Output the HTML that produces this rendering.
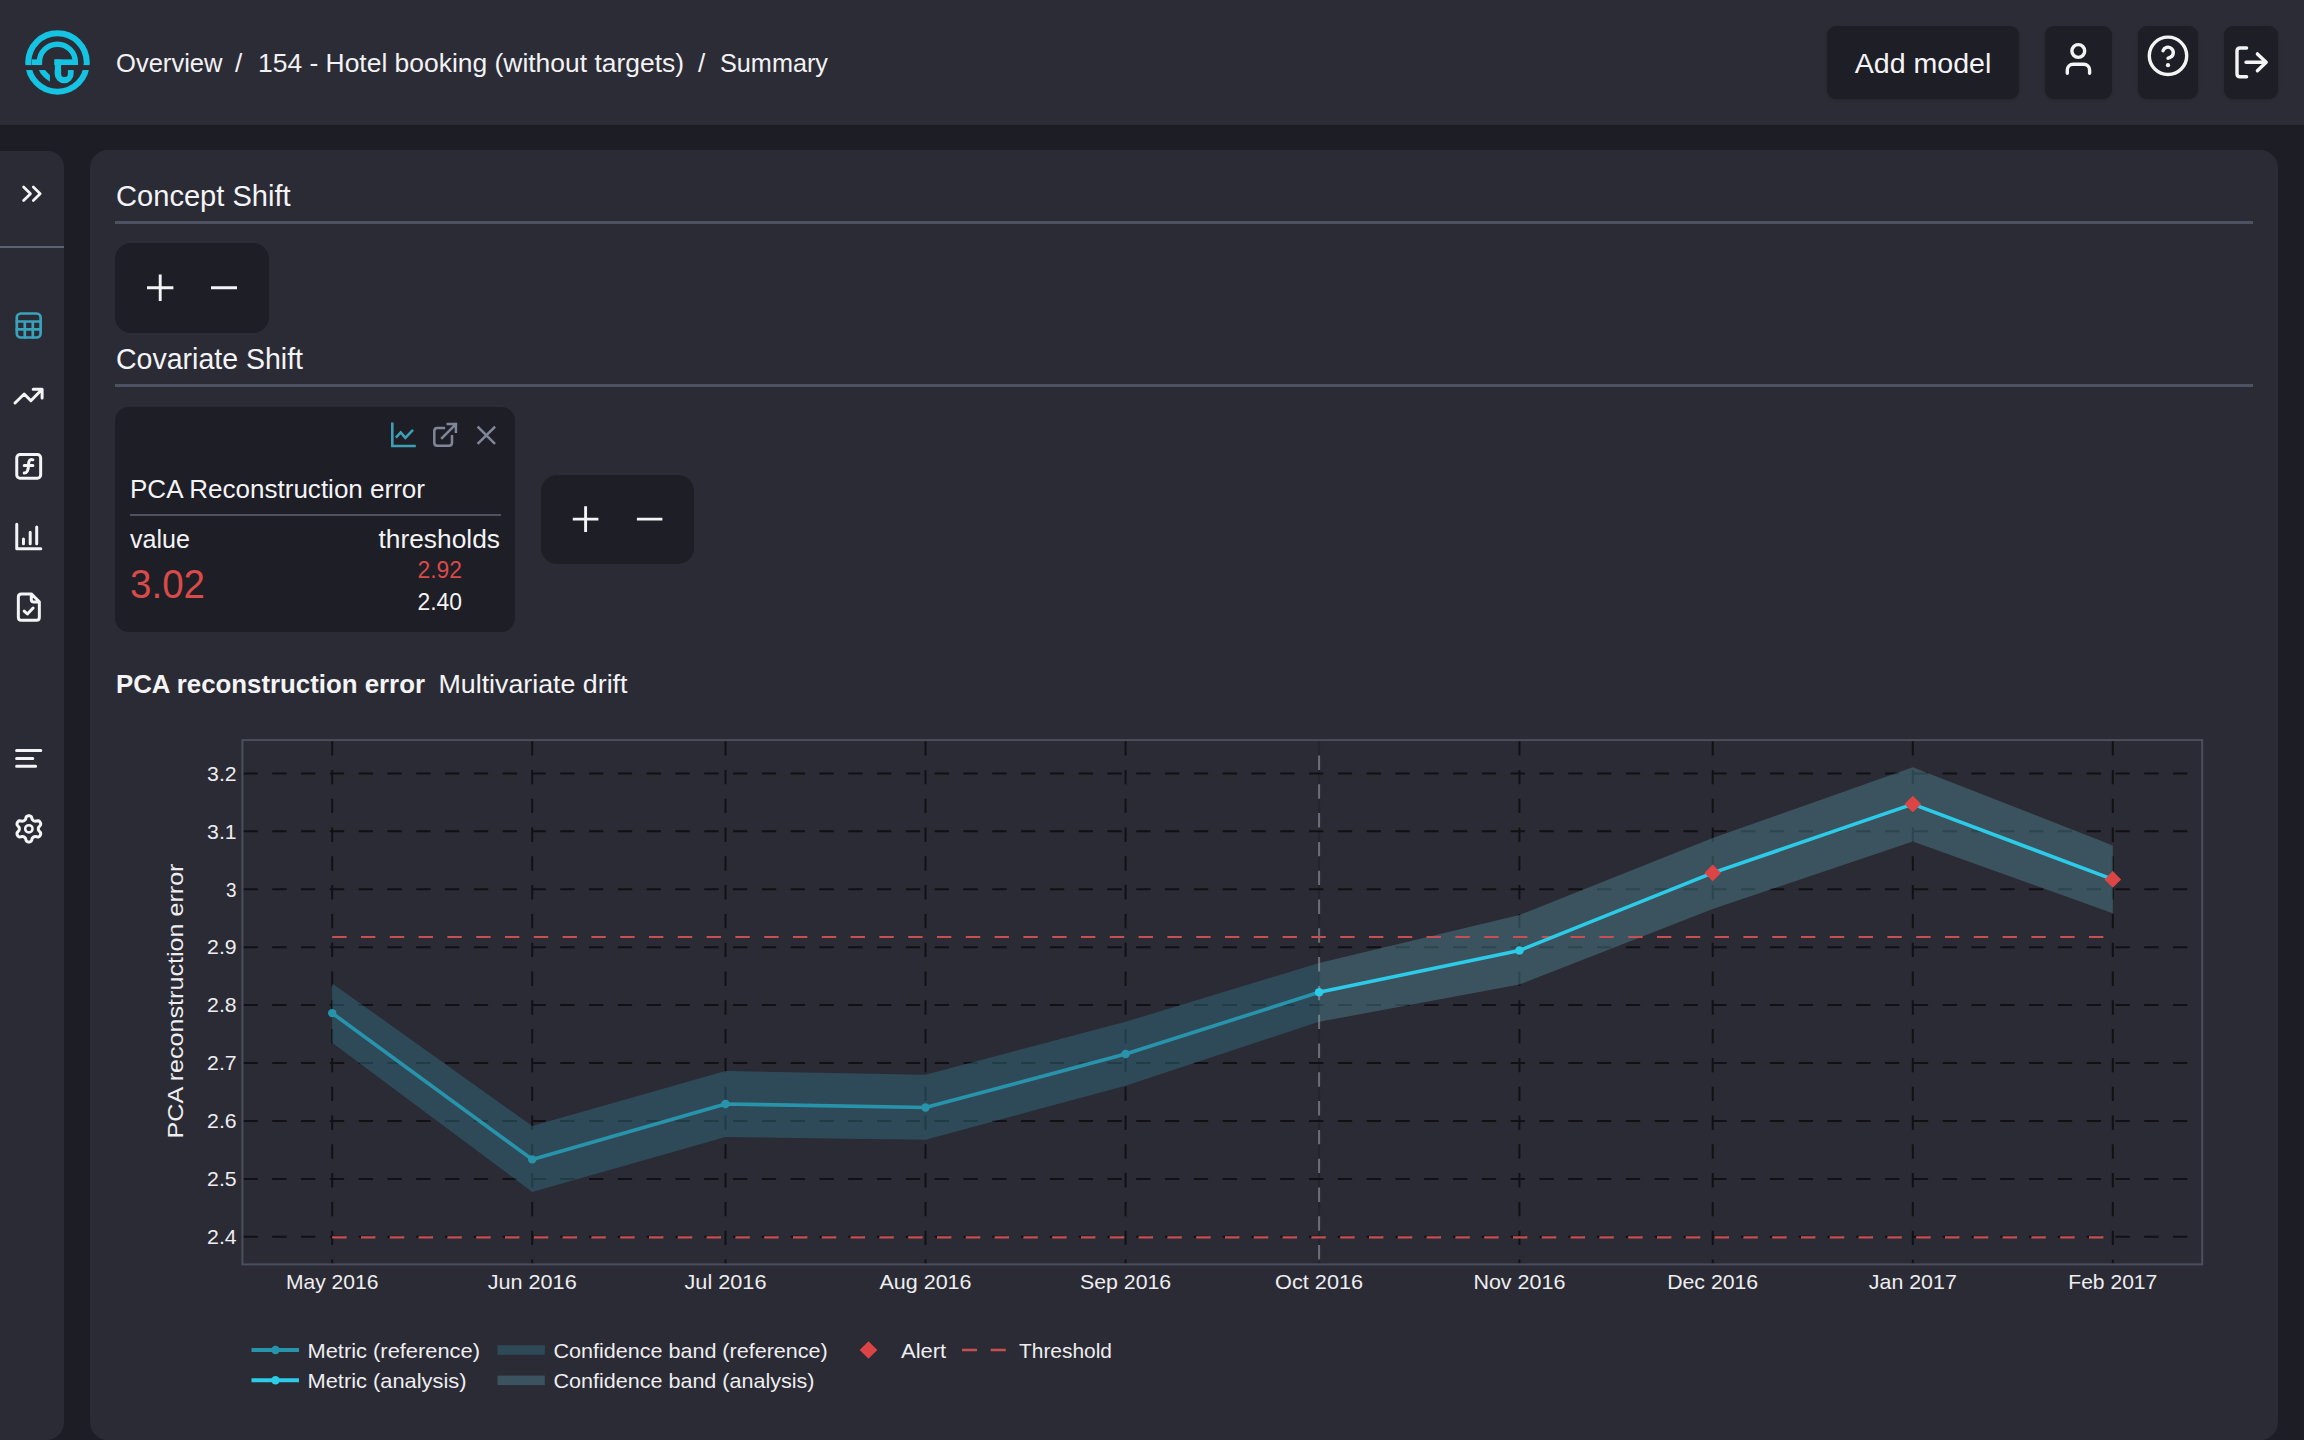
<!DOCTYPE html>
<html><head><meta charset="utf-8">
<style>
html,body{margin:0;padding:0;}
body{width:2304px;height:1440px;overflow:hidden;background:#1d1d25;position:relative;font-family:"Liberation Sans",sans-serif;color:#f4f4f6;}
.abs{position:absolute;}
.t{position:absolute;white-space:pre;line-height:1;}
</style></head>
<body>
<div class="abs" style="left:0;top:0;width:2304px;height:125px;background:#2c2c36"></div>
<svg class="abs" style="left:20px;top:25px" width="75" height="75" viewBox="0 0 1440 1440">
  <g fill="none" stroke="#14c4e2">
    <circle cx="720" cy="720" r="562" stroke-width="116"/>
    <path d="M372.5 770 L372.5 712.5 A345 345 0 0 1 1062.5 712.5 L1062.5 770" stroke-width="105"/>
  </g>
  <g fill="#14c4e2">
    <rect x="225" y="660" width="150" height="110"/>
    <rect x="660" y="660" width="405" height="110"/>
    <path d="M665 660 L790 660 L790 935 A65 65 0 0 0 920 935 L920 865 L1030 865 L1030 935 A182 182 0 0 1 665 935 Z"/>
    <path d="M362 865 L480 865 L575 965 L575 1090 Q470 1030 400 935 Z"/>
  </g>
  <rect x="0" y="770" width="665" height="95" fill="#2c2c36"/>
  <rect x="790" y="770" width="650" height="95" fill="#2c2c36"/>
</svg>
<svg class="abs" style="left:0;top:0" width="900" height="125" viewBox="0 0 900 125">
 <g font-family="Liberation Sans" font-size="26" fill="#f2f2f4">
  <text x="116" y="72.3" textLength="106.5" lengthAdjust="spacingAndGlyphs">Overview</text>
  <text x="235" y="72.3">/</text>
  <text x="258" y="72.3" textLength="426" lengthAdjust="spacingAndGlyphs">154 - Hotel booking (without targets)</text>
  <text x="698" y="72.3">/</text>
  <text x="720" y="72.3" textLength="108" lengthAdjust="spacingAndGlyphs">Summary</text>
 </g>
</svg>
<div class="abs" style="left:1827px;top:26px;width:192px;height:73px;background:#1e1e26;border-radius:9px;box-shadow:0 1px 3px rgba(0,0,0,0.18)"></div>
<div class="abs" style="left:2045px;top:26px;width:67px;height:73px;background:#1e1e26;border-radius:9px;box-shadow:0 1px 3px rgba(0,0,0,0.18)"></div>
<div class="abs" style="left:2138px;top:26px;width:60px;height:73px;background:#1e1e26;border-radius:9px;box-shadow:0 1px 3px rgba(0,0,0,0.18)"></div>
<div class="abs" style="left:2224px;top:26px;width:54px;height:73px;background:#1e1e26;border-radius:9px;box-shadow:0 1px 3px rgba(0,0,0,0.18)"></div>
<svg class="abs" style="left:1800px;top:0" width="504" height="125" viewBox="1800 0 504 125">
 <text x="1854.7" y="72.6" font-family="Liberation Sans" font-size="28.5" fill="#f4f4f6" textLength="136.7" lengthAdjust="spacingAndGlyphs">Add model</text>
 <g fill="none" stroke="#f4f4f6" stroke-width="3.4" stroke-linecap="round" stroke-linejoin="round">
  <circle cx="2078.3" cy="51" r="6.4"/>
  <path d="M2067.3 73.3 V70 A5.8 5.8 0 0 1 2073.1 64.2 H2083.8 A5.8 5.8 0 0 1 2089.6 70 V73.3"/>
  <circle cx="2168" cy="55.8" r="18.7"/>
  <path d="M2163 50.7 A5.3 5.3 0 1 1 2170.6 57.1 Q2168 58 2168 58.3"/>
  <path d="M2246.6 48 H2240 Q2237 48 2237 51 V73.8 Q2237 76.8 2240 76.8 H2246.6"/>
  <path d="M2246 62.2 H2266.2 M2257.4 53.9 L2266.2 62.2 L2257.4 70.75"/>
 </g>
 <circle cx="2168" cy="65.2" r="2.1" fill="#f4f4f6"/>
</svg>

<div class="abs" style="left:-20px;top:151px;width:84px;height:1289px;background:#2b2b35;border-radius:0 16px 18px 0"></div>
<div class="abs" style="left:0;top:246.2px;width:64px;height:2.2px;background:#5b6173"></div>
<div class="abs" style="left:90px;top:150px;width:2188px;height:1290px;background:#2b2b35;border-radius:18px"></div>

<svg class="abs" style="left:0;top:140px" width="900" height="540" viewBox="0 140 900 540">
 <g font-family="Liberation Sans" fill="#f4f4f6">
  <text x="116" y="205.8" font-size="29" textLength="174.7" lengthAdjust="spacingAndGlyphs">Concept Shift</text>
  <text x="116" y="368.8" font-size="29" textLength="187" lengthAdjust="spacingAndGlyphs">Covariate Shift</text>
 </g>
</svg>
<div class="abs" style="left:115px;top:221px;width:2138px;height:3px;background:#4d5161"></div>
<div class="abs" style="left:115px;top:384px;width:2138px;height:3px;background:#4d5161"></div>
<div class="abs" style="left:115px;top:243px;width:154px;height:90px;background:#1e1e26;border-radius:16px"></div>
<div class="abs" style="left:115px;top:406.7px;width:400px;height:225px;background:#1e1e26;border-radius:14px"></div>
<div class="abs" style="left:541px;top:475px;width:153px;height:89px;background:#1e1e26;border-radius:16px"></div>
<div class="abs" style="left:130px;top:513.5px;width:371px;height:2px;background:#4d5161"></div>
<svg class="abs" style="left:0;top:140px" width="900" height="580" viewBox="0 140 900 580">
 <g fill="none" stroke="#f4f4f6" stroke-width="2.9" stroke-linecap="butt">
  <path d="M147 287.7 H173.4 M160.2 274.4 V301 M211 287.7 H237"/>
  <path d="M572.8 519.1 H598.4 M585.6 506.3 V531.9 M636.9 519.1 H662.4"/>
 </g>
 <g fill="none" stroke="#3d9fb3" stroke-width="2.6" stroke-linecap="square" stroke-linejoin="miter">
  <path d="M392.3 423.9 V446 H414.5"/>
  <path d="M396.8 436.6 L400.7 432.4 L405.35 437.9 L412.1 430.9"/>
 </g>
 <g fill="none" stroke="#80869a" stroke-width="2.5" stroke-linecap="square" stroke-linejoin="miter">
  <path d="M443.9 428 H437.3 Q434.3 428 434.3 431 V442.7 Q434.3 445.7 437.3 445.7 H449 Q452 445.7 452 442.7 V436.35"/>
  <path d="M442.1 437.9 L455.9 424.1 M447.8 424.1 H455.9 V431.7"/>
  <path d="M478.5 427.5 L494.2 443.1 M494.2 427.5 L478.5 443.1"/>
 </g>
 <g font-family="Liberation Sans">
  <text x="130" y="498.2" font-size="26" fill="#f4f4f6" textLength="295" lengthAdjust="spacingAndGlyphs">PCA Reconstruction error</text>
  <text x="130" y="547.5" font-size="26" fill="#f4f4f6" textLength="60" lengthAdjust="spacingAndGlyphs">value</text>
  <text x="500" y="547.5" font-size="26" fill="#f4f4f6" text-anchor="end" textLength="121.5" lengthAdjust="spacingAndGlyphs">thresholds</text>
  <text x="130" y="597.8" font-size="40" fill="#d94a4a" textLength="75" lengthAdjust="spacingAndGlyphs">3.02</text>
  <text x="462" y="578" font-size="23" fill="#d94a4a" text-anchor="end" textLength="44.5" lengthAdjust="spacingAndGlyphs">2.92</text>
  <text x="462" y="610.4" font-size="23" fill="#f4f4f6" text-anchor="end" textLength="44.5" lengthAdjust="spacingAndGlyphs">2.40</text>
  <text x="116" y="693" font-size="26" font-weight="700" fill="#f4f4f6" textLength="309" lengthAdjust="spacingAndGlyphs">PCA reconstruction error</text>
  <text x="438.5" y="693" font-size="26.5" fill="#f4f4f6" textLength="189" lengthAdjust="spacingAndGlyphs">Multivariate drift</text>
 </g>
</svg>

<svg class="abs" style="left:0;top:0;overflow:visible" width="64" height="900" viewBox="0 0 64 900">
 <g fill="none" stroke="#f4f4f6" stroke-width="3" stroke-linecap="round" stroke-linejoin="round">
  <path d="M23.6 187 L30.5 193.7 L23.6 200.5 M33.3 187 L40.2 193.7 L33.3 200.5" stroke-width="2.7"/>
  <path d="M15 403 L24.2 394 L30.9 400.7 L42.1 389.3 M33.2 389.3 L42.1 389.3 L42.1 398"/>
  <rect x="16.75" y="454.5" width="23.9" height="23.75" rx="3.2"/>
  <path d="M32.9 459.8 C29.8 458.6 28.6 460.8 28.45 465.4 C28.3 470.4 27.2 473.1 24.2 473.0 M24.2 465.4 L32.9 465.4"/>
  <path d="M16.75 524.3 L16.75 548.7 L40.8 548.7 M23.45 538.9 L23.45 543.7 M30.2 532.2 L30.2 543.7 M36.7 527.1 L36.7 543.7"/>
  <path d="M31.3 593.9 L31.3 599.5 Q31.3 602 33.8 602 L39.35 602 M39.35 601.75 L39.35 617.3 Q39.35 620.3 36.35 620.3 L21.35 620.3 Q18.35 620.3 18.35 617.3 L18.35 596.9 Q18.35 593.9 21.35 593.9 L31.3 593.9 L39.35 601.75 M24.2 611.1 L27.4 614 L33.1 608"/>
  <path d="M16.6 750.4 L40.8 750.4 M16.6 758.4 L32.8 758.4 M16.6 766.3 L35.6 766.3"/>
  <path d="M38.3 828.9 L38.4 829.5 L38.5 830.1 L38.9 830.8 L39.8 831.8 L40.6 832.8 L40.7 833.8 L40.6 834.6 L40.2 835.4 L39.7 836.1 L39.0 836.7 L38.2 837.0 L36.8 836.8 L35.6 836.5 L34.8 836.6 L34.1 836.8 L33.6 837.0 L33.1 837.4 L32.6 837.9 L32.1 838.5 L31.8 839.8 L31.3 841.0 L30.5 841.6 L29.7 841.9 L28.9 842.0 L28.0 841.9 L27.2 841.6 L26.4 841.0 L25.9 839.8 L25.6 838.5 L25.1 837.9 L24.6 837.4 L24.1 837.0 L23.6 836.8 L22.9 836.6 L22.1 836.5 L20.9 836.8 L19.5 837.0 L18.7 836.7 L18.0 836.1 L17.5 835.4 L17.1 834.6 L17.0 833.8 L17.1 832.8 L17.9 831.8 L18.8 830.8 L19.2 830.1 L19.3 829.5 L19.4 828.9 L19.3 828.2 L19.2 827.6 L18.8 826.9 L17.9 825.9 L17.1 824.9 L17.0 823.9 L17.1 823.1 L17.5 822.3 L18.0 821.6 L18.7 821.0 L19.5 820.7 L20.9 820.9 L22.1 821.2 L22.9 821.1 L23.6 820.9 L24.1 820.7 L24.6 820.3 L25.1 819.8 L25.6 819.2 L25.9 817.9 L26.4 816.7 L27.2 816.1 L28.0 815.8 L28.8 815.7 L29.7 815.8 L30.5 816.1 L31.3 816.7 L31.8 817.9 L32.1 819.2 L32.6 819.8 L33.1 820.3 L33.6 820.7 L34.1 820.9 L34.8 821.1 L35.6 821.2 L36.8 820.9 L38.2 820.7 L39.0 821.0 L39.7 821.6 L40.2 822.3 L40.6 823.1 L40.7 823.9 L40.6 824.9 L39.8 825.9 L38.9 826.9 L38.5 827.6 L38.4 828.2Z"/>
  <circle cx="28.85" cy="828.85" r="3.7" stroke-width="2.5"/>
 </g>
 <g fill="none" stroke="#3aa3bb" stroke-width="2.7" stroke-linecap="round" stroke-linejoin="round">
  <rect x="16.8" y="313.5" width="23.8" height="24" rx="4"/>
  <path d="M16.8 321.5 L40.6 321.5 M16.8 329.4 L40.6 329.4 M24.8 321.5 L24.8 337.5 M32.8 321.5 L32.8 337.5"/>
 </g>
</svg><svg class="abs" style="left:0;top:0" width="2304" height="1440" viewBox="0 0 2304 1440">
<path d="M1319.1 741.1V1263.4" stroke="#24242b" stroke-width="2" stroke-dasharray="14.40 14.40" fill="none"/>
<path d="M243.4 773.4H2201.5 M243.4 831.3H2201.5 M243.4 889.3H2201.5 M243.4 947.2H2201.5 M243.4 1005.1H2201.5 M243.4 1063.0H2201.5 M243.4 1121.0H2201.5 M243.4 1178.9H2201.5 M243.4 1236.8H2201.5 M332.2 741.1V1263.4 M532.2 741.1V1263.4 M725.5 741.1V1263.4 M925.5 741.1V1263.4 M1125.6 741.1V1263.4 M1519.4 741.1V1263.4 M1712.7 741.1V1263.4 M1912.8 741.1V1263.4 M2112.8 741.1V1263.4" stroke="#111115" stroke-width="2" stroke-dasharray="14.40 14.40" fill="none"/>
<path d="M332.2 983.4 L532.2 1126.0 L725.5 1071.0 L925.5 1074.7 L1125.6 1021.8 L1319.1 963.0 L1319.1 1021.8 L1125.6 1085.7 L925.5 1139.7 L725.5 1137.0 L532.2 1191.9 L332.2 1042.8Z" fill="rgba(52,114,131,0.45)"/>
<path d="M1319.1 963.0 L1519.4 915.0 L1712.7 838.0 L1912.8 767.2 L2112.8 845.4 L2112.8 913.3 L1912.8 841.6 L1712.7 908.9 L1519.4 984.6 L1319.1 1021.8Z" fill="rgba(79,132,146,0.45)"/>
<path d="M1319.1 755.5V1263.4" stroke="rgba(165,165,170,0.55)" stroke-width="2" stroke-dasharray="14.40 14.40" fill="none"/>
<path d="M332.2 937.0H2112.8" stroke="#c84f4f" stroke-width="2.2" stroke-dasharray="14.40 14.40" fill="none"/>
<path d="M332.2 1237.4H2112.8" stroke="#c84f4f" stroke-width="2.2" stroke-dasharray="14.40 14.40" fill="none"/>
<path d="M332.2 1013.1 L532.2 1159.4 L725.5 1104.0 L925.5 1107.5 L1125.6 1054.0 L1319.1 992.3" stroke="#2894ac" stroke-width="3.6" fill="none" stroke-linejoin="round"/>
<path d="M1319.1 992.3 L1519.4 950.5 L1712.7 872.9 L1912.8 804.1 L2112.8 879.4" stroke="#2ccbe7" stroke-width="3.6" fill="none" stroke-linejoin="round"/>
<circle cx="332.2" cy="1013.1" r="4.2" fill="#2894ac"/>
<circle cx="532.2" cy="1159.4" r="4.2" fill="#2894ac"/>
<circle cx="725.5" cy="1104.0" r="4.2" fill="#2894ac"/>
<circle cx="925.5" cy="1107.5" r="4.2" fill="#2894ac"/>
<circle cx="1125.6" cy="1054.0" r="4.2" fill="#2894ac"/>
<circle cx="1319.1" cy="992.3" r="4.3" fill="#2ccbe7"/>
<circle cx="1519.4" cy="950.5" r="4.3" fill="#2ccbe7"/>
<circle cx="1712.7" cy="872.9" r="4.3" fill="#2ccbe7"/>
<circle cx="1912.8" cy="804.1" r="4.3" fill="#2ccbe7"/>
<circle cx="2112.8" cy="879.4" r="4.3" fill="#2ccbe7"/>
<path d="M1712.7 864.6L1721.0 872.9L1712.7 881.2L1704.4 872.9Z" fill="#dc4545"/>
<path d="M1912.8 795.8L1921.1 804.1L1912.8 812.4L1904.5 804.1Z" fill="#dc4545"/>
<path d="M2112.8 871.1L2121.1 879.4L2112.8 887.7L2104.5 879.4Z" fill="#dc4545"/>
<rect x="242.4" y="740.1" width="1959.8" height="524.3" fill="none" stroke="#4b4e5c" stroke-width="2"/>
<text x="236.6" y="780.6" font-family="Liberation Sans" fill="#eeeef0" font-size="20.2" text-anchor="end" textLength="29.5" lengthAdjust="spacingAndGlyphs">3.2</text>
<text x="236.6" y="838.5" font-family="Liberation Sans" fill="#eeeef0" font-size="20.2" text-anchor="end" textLength="29.5" lengthAdjust="spacingAndGlyphs">3.1</text>
<text x="236.6" y="896.5" font-family="Liberation Sans" fill="#eeeef0" font-size="20.2" text-anchor="end" textLength="10.5" lengthAdjust="spacingAndGlyphs">3</text>
<text x="236.6" y="954.4" font-family="Liberation Sans" fill="#eeeef0" font-size="20.2" text-anchor="end" textLength="29.5" lengthAdjust="spacingAndGlyphs">2.9</text>
<text x="236.6" y="1012.3" font-family="Liberation Sans" fill="#eeeef0" font-size="20.2" text-anchor="end" textLength="29.5" lengthAdjust="spacingAndGlyphs">2.8</text>
<text x="236.6" y="1070.2" font-family="Liberation Sans" fill="#eeeef0" font-size="20.2" text-anchor="end" textLength="29.5" lengthAdjust="spacingAndGlyphs">2.7</text>
<text x="236.6" y="1128.2" font-family="Liberation Sans" fill="#eeeef0" font-size="20.2" text-anchor="end" textLength="29.5" lengthAdjust="spacingAndGlyphs">2.6</text>
<text x="236.6" y="1186.1" font-family="Liberation Sans" fill="#eeeef0" font-size="20.2" text-anchor="end" textLength="29.5" lengthAdjust="spacingAndGlyphs">2.5</text>
<text x="236.6" y="1244.0" font-family="Liberation Sans" fill="#eeeef0" font-size="20.2" text-anchor="end" textLength="29.5" lengthAdjust="spacingAndGlyphs">2.4</text>
<text x="332.2" y="1288.8" font-family="Liberation Sans" fill="#eeeef0" font-size="20.6" text-anchor="middle" textLength="92.4" lengthAdjust="spacingAndGlyphs">May 2016</text>
<text x="532.2" y="1288.8" font-family="Liberation Sans" fill="#eeeef0" font-size="20.6" text-anchor="middle" textLength="89" lengthAdjust="spacingAndGlyphs">Jun 2016</text>
<text x="725.5" y="1288.8" font-family="Liberation Sans" fill="#eeeef0" font-size="20.6" text-anchor="middle" textLength="82" lengthAdjust="spacingAndGlyphs">Jul 2016</text>
<text x="925.5" y="1288.8" font-family="Liberation Sans" fill="#eeeef0" font-size="20.6" text-anchor="middle" textLength="92" lengthAdjust="spacingAndGlyphs">Aug 2016</text>
<text x="1125.6" y="1288.8" font-family="Liberation Sans" fill="#eeeef0" font-size="20.6" text-anchor="middle" textLength="91" lengthAdjust="spacingAndGlyphs">Sep 2016</text>
<text x="1319.1" y="1288.8" font-family="Liberation Sans" fill="#eeeef0" font-size="20.6" text-anchor="middle" textLength="88" lengthAdjust="spacingAndGlyphs">Oct 2016</text>
<text x="1519.4" y="1288.8" font-family="Liberation Sans" fill="#eeeef0" font-size="20.6" text-anchor="middle" textLength="92" lengthAdjust="spacingAndGlyphs">Nov 2016</text>
<text x="1712.7" y="1288.8" font-family="Liberation Sans" fill="#eeeef0" font-size="20.6" text-anchor="middle" textLength="91" lengthAdjust="spacingAndGlyphs">Dec 2016</text>
<text x="1912.8" y="1288.8" font-family="Liberation Sans" fill="#eeeef0" font-size="20.6" text-anchor="middle" textLength="88" lengthAdjust="spacingAndGlyphs">Jan 2017</text>
<text x="2112.8" y="1288.8" font-family="Liberation Sans" fill="#eeeef0" font-size="20.6" text-anchor="middle" textLength="89" lengthAdjust="spacingAndGlyphs">Feb 2017</text>
<text transform="translate(182.5 1001) rotate(-90)" font-family="Liberation Sans" fill="#eeeef0" font-size="22.5" text-anchor="middle" textLength="275" lengthAdjust="spacingAndGlyphs">PCA reconstruction error</text>
<path d="M251.5 1350H299" stroke="#2894ac" stroke-width="4"/><circle cx="275.5" cy="1350" r="4.2" fill="#2894ac"/>
<path d="M251.5 1380.3H299" stroke="#2ccbe7" stroke-width="4"/><circle cx="275.5" cy="1380.3" r="4.2" fill="#2ccbe7"/>
<rect x="497.5" y="1345.3" width="47.3" height="9.5" fill="rgba(52,114,131,0.45)"/>
<rect x="497.5" y="1375.6" width="47.3" height="9.5" fill="rgba(79,132,146,0.45)"/>
<path d="M868.5 1341.3L877.3 1350L868.5 1358.7L859.7 1350Z" fill="#dc4545"/>
<path d="M962 1350H977M990.7 1350H1005.8" stroke="#c84f4f" stroke-width="2.5"/>
<text x="307.5" y="1357.6" font-family="Liberation Sans" fill="#eeeef0" font-size="20.4" textLength="172.5" lengthAdjust="spacingAndGlyphs">Metric (reference)</text>
<text x="553.5" y="1357.6" font-family="Liberation Sans" fill="#eeeef0" font-size="20.4" textLength="274.2" lengthAdjust="spacingAndGlyphs">Confidence band (reference)</text>
<text x="901" y="1357.6" font-family="Liberation Sans" fill="#eeeef0" font-size="20.4" textLength="45.2" lengthAdjust="spacingAndGlyphs">Alert</text>
<text x="1019" y="1357.6" font-family="Liberation Sans" fill="#eeeef0" font-size="20.4" textLength="93" lengthAdjust="spacingAndGlyphs">Threshold</text>
<text x="307.5" y="1387.9" font-family="Liberation Sans" fill="#eeeef0" font-size="20.4" textLength="159" lengthAdjust="spacingAndGlyphs">Metric (analysis)</text>
<text x="553.5" y="1387.9" font-family="Liberation Sans" fill="#eeeef0" font-size="20.4" textLength="261" lengthAdjust="spacingAndGlyphs">Confidence band (analysis)</text>
</svg>
</body></html>
